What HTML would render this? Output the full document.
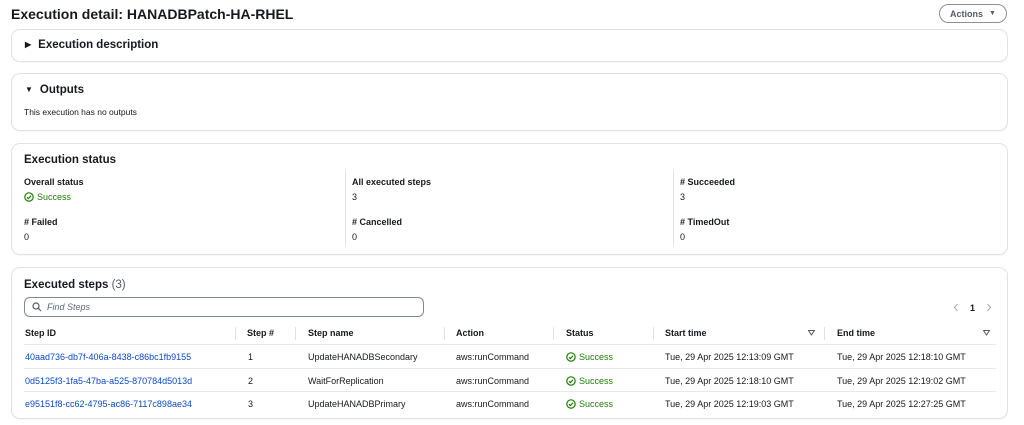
<!DOCTYPE html>
<html><head><style>
*{box-sizing:border-box;margin:0;padding:0}
body{width:1024px;height:425px;background:#fff;font-family:"Liberation Sans",sans-serif;color:#16191f;position:relative;overflow:hidden;font-size:9px}
.a{position:absolute;white-space:nowrap}
.box{position:absolute;left:11px;width:997px;border:1px solid #e2e2e2;border-radius:9px;background:#fff;box-shadow:0 1px 1px rgba(0,0,0,.04)}
.h{font-weight:bold;font-size:11.5px}
.b{font-weight:bold}
.g{color:#1d8102}
.l{color:#0a49c7}
.vd{position:absolute;width:1px;background:#e2e2e2}
.hl{position:absolute;height:1px;background:#e9e9e9;left:24px;width:972px}
.ok{display:inline-block;width:10px;height:10px;vertical-align:-2px;margin-right:3px}
</style></head><body>
<svg width="0" height="0" style="position:absolute"><defs><symbol id="ck" viewBox="0 0 10 10"><circle cx="5" cy="5" r="4.2" fill="none" stroke="#1d8102" stroke-width="1.2"/><path d="M3 5.2L4.4 6.6L7 3.8" fill="none" stroke="#1d8102" stroke-width="1.2"/></symbol></defs></svg>
<div class="a b" style="left:11px;top:6px;font-size:14px">Execution detail: HANADBPatch-HA-RHEL</div>
<div class="a" style="left:939px;top:4px;width:68px;height:19px;border:1px solid #8d9096;border-radius:10px;color:#545b64;font-size:9px;font-weight:bold;display:flex;align-items:center;justify-content:center">Actions <span style="font-size:7px;margin-left:6px">▼</span></div>

<div class="box" style="top:29px;height:33px"></div>
<div class="a h" style="left:25px;top:39px"><span style="font-size:8px;margin-right:7px;vertical-align:1px">▶</span>Execution description</div>

<div class="box" style="top:73px;height:58px"></div>
<div class="a h" style="left:25px;top:84px"><span style="font-size:8px;margin-right:7px;vertical-align:1px">▼</span>Outputs</div>
<div class="a" style="left:24px;top:107px;font-size:8.5px">This execution has no outputs</div>

<div class="box" style="top:143px;height:112px"></div>
<div class="a h" style="left:24px;top:154px">Execution status</div>
<div class="vd" style="left:345px;top:170px;height:76px"></div>
<div class="vd" style="left:673px;top:170px;height:76px"></div>
<div class="a b" style="left:24px;top:177px">Overall status</div>
<div class="a g" style="left:24px;top:192px"><svg class="ok"><use href="#ck"/></svg>Success</div>
<div class="a b" style="left:352px;top:177px">All executed steps</div>
<div class="a" style="left:352px;top:192px">3</div>
<div class="a b" style="left:680px;top:177px"># Succeeded</div>
<div class="a" style="left:680px;top:192px">3</div>
<div class="a b" style="left:24px;top:217px"># Failed</div>
<div class="a" style="left:24px;top:232px">0</div>
<div class="a b" style="left:352px;top:217px"># Cancelled</div>
<div class="a" style="left:352px;top:232px">0</div>
<div class="a b" style="left:680px;top:217px"># TimedOut</div>
<div class="a" style="left:680px;top:232px">0</div>

<div class="box" style="top:267px;height:152px"></div>
<div class="a h" style="left:24px;top:279px">Executed steps <span style="font-weight:normal;color:#545b64">(3)</span></div>
<div class="a" style="left:24px;top:297px;width:400px;height:20px;border:1px solid #7d8998;border-radius:6px"></div>
<svg class="a" style="left:32px;top:302px" width="10" height="10" viewBox="0 0 10 10"><circle cx="4" cy="4" r="3" fill="none" stroke="#545b64" stroke-width="1.2"/><path d="M6.2 6.2L9 9" stroke="#545b64" stroke-width="1.2"/></svg>
<div class="a" style="left:47px;top:302px;font-style:italic;color:#5f6b7a">Find Steps</div>
<svg class="a" style="left:953px;top:303px" width="6" height="9"><path d="M4.5 1L1.5 4.5L4.5 8" fill="none" stroke="#aab" stroke-width="1"/></svg>
<div class="a b" style="left:970px;top:303px">1</div>
<svg class="a" style="left:986px;top:303px" width="6" height="9"><path d="M1.5 1L4.5 4.5L1.5 8" fill="none" stroke="#aab" stroke-width="1"/></svg>

<div class="vd" style="left:235px;top:327px;height:13px"></div>
<div class="vd" style="left:295px;top:327px;height:13px"></div>
<div class="vd" style="left:444px;top:327px;height:13px"></div>
<div class="vd" style="left:553px;top:327px;height:13px"></div>
<div class="vd" style="left:653px;top:327px;height:13px"></div>
<div class="vd" style="left:824px;top:327px;height:13px"></div>
<div class="a b" style="left:25px;top:328px">Step ID</div>
<div class="a b" style="left:247px;top:328px">Step #</div>
<div class="a b" style="left:308px;top:328px">Step name</div>
<div class="a b" style="left:456px;top:328px">Action</div>
<div class="a b" style="left:566px;top:328px">Status</div>
<div class="a b" style="left:665px;top:328px">Start time</div>
<svg class="a" style="left:808px;top:330px" width="7" height="6"><path d="M0.5 0.5H6.5L3.5 5Z" fill="none" stroke="#545b64" stroke-width="1"/></svg>
<div class="a b" style="left:837px;top:328px">End time</div>
<svg class="a" style="left:983px;top:330px" width="7" height="6"><path d="M0.5 0.5H6.5L3.5 5Z" fill="none" stroke="#545b64" stroke-width="1"/></svg>
<div class="hl" style="top:344px"></div>
<div class="hl" style="top:368px"></div>
<div class="hl" style="top:391px"></div>

<div class="a l" style="left:25px;top:352px">40aad736-db7f-406a-8438-c86bc1fb9155</div>
<div class="a" style="left:248px;top:352px">1</div>
<div class="a" style="left:308px;top:352px">UpdateHANADBSecondary</div>
<div class="a" style="left:456px;top:352px">aws:runCommand</div>
<div class="a g" style="left:566px;top:352px"><svg class="ok"><use href="#ck"/></svg>Success</div>
<div class="a" style="left:665px;top:352px">Tue, 29 Apr 2025 12:13:09 GMT</div>
<div class="a" style="left:837px;top:352px">Tue, 29 Apr 2025 12:18:10 GMT</div>

<div class="a l" style="left:25px;top:376px">0d5125f3-1fa5-47ba-a525-870784d5013d</div>
<div class="a" style="left:248px;top:376px">2</div>
<div class="a" style="left:308px;top:376px">WaitForReplication</div>
<div class="a" style="left:456px;top:376px">aws:runCommand</div>
<div class="a g" style="left:566px;top:376px"><svg class="ok"><use href="#ck"/></svg>Success</div>
<div class="a" style="left:665px;top:376px">Tue, 29 Apr 2025 12:18:10 GMT</div>
<div class="a" style="left:837px;top:376px">Tue, 29 Apr 2025 12:19:02 GMT</div>

<div class="a l" style="left:25px;top:399px">e95151f8-cc62-4795-ac86-7117c898ae34</div>
<div class="a" style="left:248px;top:399px">3</div>
<div class="a" style="left:308px;top:399px">UpdateHANADBPrimary</div>
<div class="a" style="left:456px;top:399px">aws:runCommand</div>
<div class="a g" style="left:566px;top:399px"><svg class="ok"><use href="#ck"/></svg>Success</div>
<div class="a" style="left:665px;top:399px">Tue, 29 Apr 2025 12:19:03 GMT</div>
<div class="a" style="left:837px;top:399px">Tue, 29 Apr 2025 12:27:25 GMT</div>
</body></html>
